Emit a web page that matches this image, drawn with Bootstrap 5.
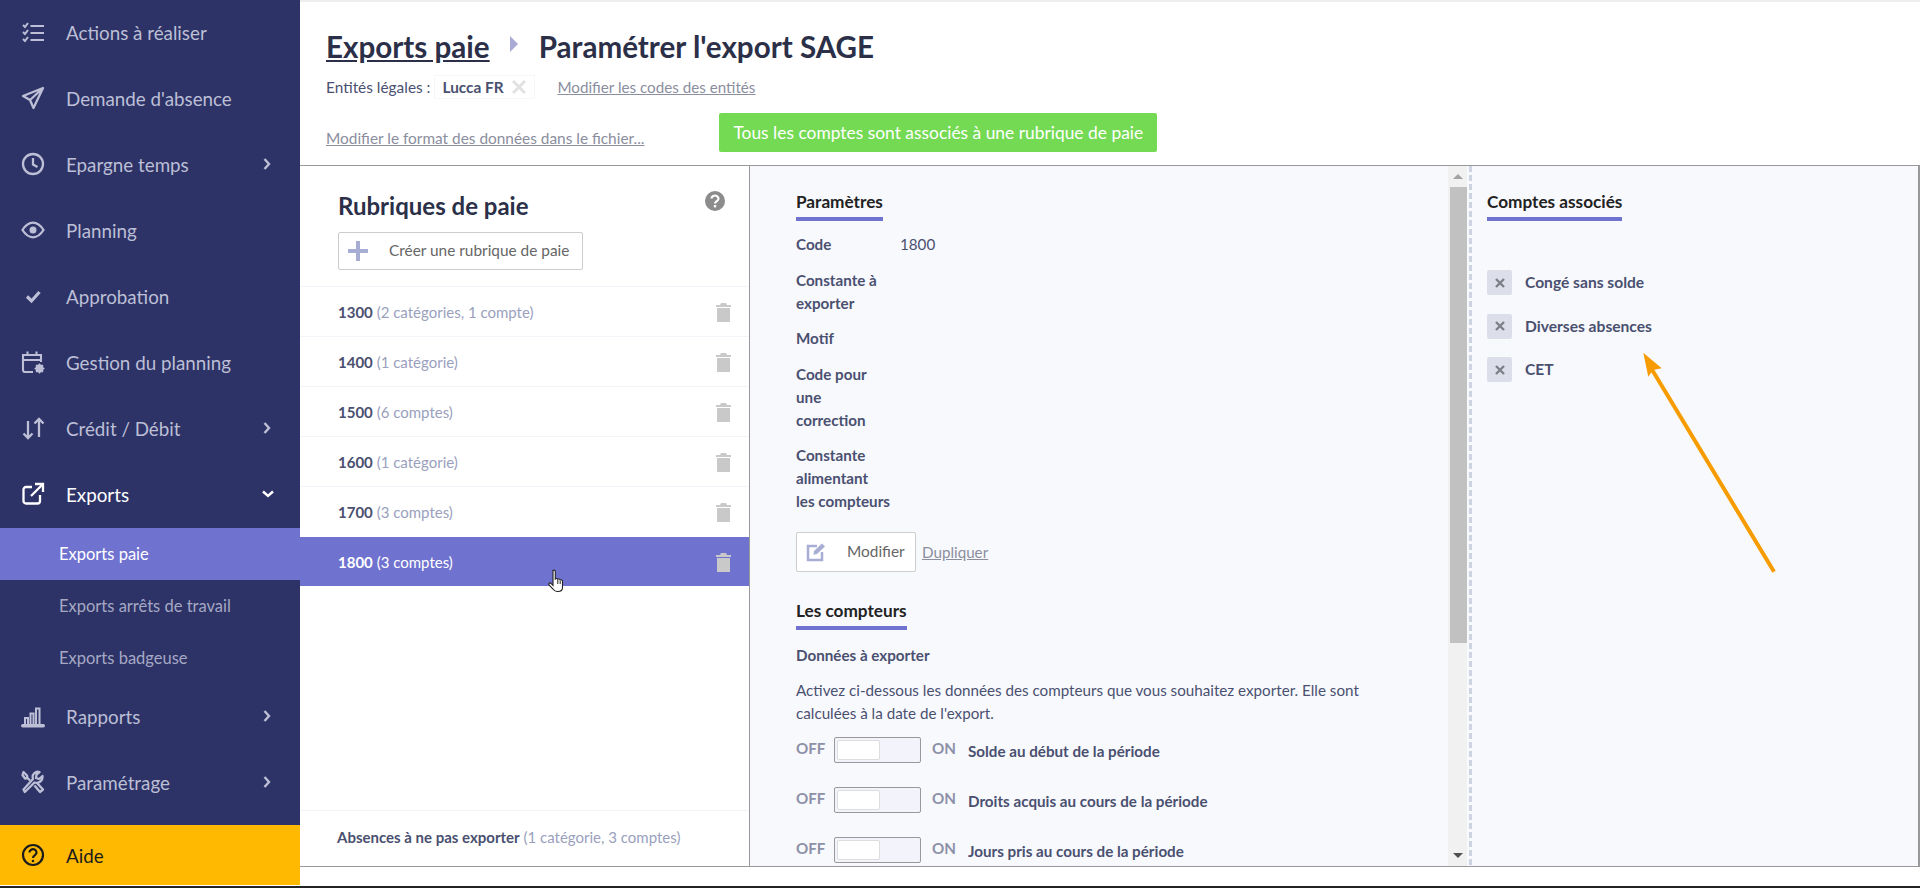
<!DOCTYPE html>
<html lang="fr">
<head>
<meta charset="utf-8">
<title>Paramétrer l'export SAGE</title>
<link href="https://cdn.jsdelivr.net/npm/bootstrap@5.3.0/dist/css/bootstrap.min.css" rel="stylesheet">
<style>
html,body{height:888px;overflow:hidden}
body{font-family:"Lato","Noto Sans",sans-serif;font-size:15.2px;line-height:23px;color:#4a5070;background:#fff}
.app-shell{height:886px}
.foot-strip{height:2px;background:#222}
.side-bar{width:300px;flex:none;background:#2d3366;height:885px}
.side-row{height:66px;padding:0 29px 2px 21px;color:#bcbfd6;font-size:18.8px;text-decoration:none}
.side-row svg.ico{width:24px;height:24px;flex:none;margin-right:21px}
.side-row.is-open{color:#fff}
.side-down{margin-right:-3px}
.side-sub{height:52px;padding:0 0 0 59px;color:#a5a8c4;font-size:16.5px;text-decoration:none}
.side-sub.is-on{background:#6f72cf;color:#fff}
.side-help{height:60px;padding-left:21px;background:#ffb900;color:#1c1c1c;font-size:18.8px;text-decoration:none}
.side-help svg{width:24px;height:24px;margin-right:21px}
.main-pane{min-width:0;border-top:2px solid #eee}
.top-head{height:164px;padding-left:26px;border-bottom:1px solid #999;flex:none}
.title-row{height:46px;margin-top:22px;font-size:29.6px;line-height:46px;font-weight:700;color:#2b3048}
.title-row a{color:#2b3048}
.crumb-arrow{width:8px;height:16px;margin:-6px 21px 0 20px}
.ent-row{margin-top:5px;height:24px;font-size:15.4px;line-height:24px}
.ent-chip{border:1px solid #f6f7fa;padding:0 8px 0 7px;margin:0 22px 0 4px;height:24px;font-weight:700;width:101px;flex:none;white-space:nowrap}
.mute-link{color:#8b8e9e;font-size:15.2px}
.head-third{margin-top:14px}
.head-third .mute-link{font-size:15.4px;margin-bottom:2px}
.ok-banner{background:#74da53;color:#fff;height:39px;line-height:39px;padding:0 14px;border-radius:2px;font-size:17.4px;flex:none;width:438px;white-space:nowrap;margin-left:75px}
.work-area{height:701px;border-bottom:1px solid #999;border-right:2px solid #999}
.rub-pane{width:450px;flex:none;border-right:1px solid #999;position:relative}
.rub-top{padding:25px 24px 16px 38px}
.rub-title{font-size:24px;line-height:30px;font-weight:700;color:#2b3048}
.plain-btn{height:38px;width:245px;border:1px solid #ccc;border-radius:2px;color:#666;background:#fff;font-size:15.4px;margin-top:11px;padding:0 0 0 9px;white-space:nowrap}
.plain-btn svg{margin-right:21px}
.rub-line{height:50px;padding:1px 18px 0 38px;border-top:1px solid #f3f4fa;font-size:15px}
.rub-line b{font-weight:700}
.rub-line span{color:#9a9fbe}
.rub-line.is-on{background:#6f72cf;color:#fff;height:49px;border-top:0;margin-top:1px}
.rub-line.is-on span{color:#fff}
.rub-foot{height:56px;padding:0 0 2px 37px;margin-top:auto;border-top:1px solid #f3f4fa;font-size:15px}
.rub-foot b{font-weight:700}
.rub-foot span{color:#9a9fbe}
.hand-cursor{position:absolute;left:248px;top:403px}
.param-pane{flex:1;min-width:0;background:#f8f9fd;overflow:hidden;padding:24px 0 0 46px}
.sec-head{display:inline-block;font-size:17.2px;line-height:24px;font-weight:700;color:#222;padding-bottom:3px;border-bottom:4px solid #6f72cf}
.kv-list{margin-top:12px}
.kv-row{margin-bottom:12.5px;font-size:15.2px}
.kv-row b{display:block;width:104px;font-weight:700;white-space:nowrap}
.edit-btn{height:40px;width:120px;border:1px solid #ccc;border-radius:2px;background:#fff;color:#666;font-size:15.4px;padding:0 0 0 9px}
.edit-btn svg{margin-right:21px}
.dup-link{color:#8b8e9e;font-size:15.2px;margin-left:6px}
.btn-line{margin-top:19px}
.sec-two{margin-top:27px}
.sub-strong{margin-top:14px;font-weight:700;font-size:15.2px}
.intro-text{margin:12px 0 0;font-size:15.2px;white-space:nowrap}
.toggle-line{height:50px;font-size:15.2px;white-space:nowrap}
.toggle-line b{margin-top:3px}
.toggle-list{margin-top:12px}
.off-on{font-weight:700;color:#8d91a8;width:38px;flex:none}
.off-on.on-word{width:36px;margin-left:11px}
.toggle-track{width:87px;height:26px;border:1px solid #999;border-radius:2px;background:#f2f3fb;padding:2px;flex:none}
.toggle-knob{width:43px;height:20px;background:#fff;border:1px solid #ddd;border-radius:2px}
.scroll-col{width:19px;background:#f1f1f1;flex:none}
.scroll-arrow{height:21px}
.scroll-thumb{height:456px;background:#c1c1c1;margin-left:2px}
.gap-fill{width:2px;flex:none;background:#f8f9fd}
.dash-col{width:3px;flex:none;background:repeating-linear-gradient(180deg,#ced3e2 0 6px,transparent 6px 9px) #f8f9fd}
.acc-pane{width:446px;flex:none;background:#f8f9fd;padding:24px 0 0 15px;position:relative}
.acc-list{margin-top:49px}
.acc-row{height:25px;margin-bottom:18.5px;font-weight:700;font-size:15.6px}
.acc-x{width:25px;height:25px;background:#dcdfe9;border-radius:2px;margin-right:13px}
.point-arrow{position:absolute;left:168px;top:184px}
</style>
</head>
<body>
<div class="app-shell d-flex">
  <nav class="side-bar d-flex flex-column flex-shrink-0">
    <a class="side-row d-flex align-items-center" href="#"><svg class="ico" viewBox="0 0 24 24" fill="none" stroke="currentColor" stroke-width="2.2"><path d="M9.5 6H23M9.5 13H23M9.5 20H23"/><path d="M2 5l2 2 3-4M2 12l2 2 3-4M2 19l2 2 3-4" stroke-width="2"/></svg>Actions à réaliser</a>
    <a class="side-row d-flex align-items-center" href="#"><svg class="ico" viewBox="0 0 24 24" fill="none" stroke="currentColor" stroke-width="2.3" stroke-linejoin="round"><path d="M22 2L2 10l7 4 3.5 8zM22 2L9 14"/></svg>Demande d'absence</a>
    <a class="side-row d-flex align-items-center" href="#"><svg class="ico" viewBox="0 0 24 24" fill="none" stroke="currentColor" stroke-width="2.3"><circle cx="12" cy="12" r="10"/><path d="M12 6v6.5l4.5 2.5"/></svg>Epargne temps<svg class="ms-auto" width="8" height="12" viewBox="0 0 8 12" fill="none" stroke="currentColor" stroke-width="2.4"><path d="M1.5 1l4.5 5-4.5 5"/></svg></a>
    <a class="side-row d-flex align-items-center" href="#"><svg class="ico" viewBox="0 0 24 24" fill="none" stroke="currentColor" stroke-width="2.3"><path d="M1.5 12C5 6.5 8.5 4.7 12 4.7S19 6.5 22.5 12C19 17.5 15.5 19.3 12 19.3S5 17.5 1.5 12z"/><circle cx="12" cy="12" r="3.5" fill="currentColor" stroke="none"/></svg>Planning</a>
    <a class="side-row d-flex align-items-center" href="#"><svg class="ico" viewBox="0 0 24 24" fill="none" stroke="currentColor" stroke-width="3.2"><path d="M6 12.5l4.500 4.500 8-9"/></svg>Approbation</a>
    <a class="side-row d-flex align-items-center" href="#"><svg class="ico" viewBox="0 0 24 24" fill="none" stroke="currentColor" stroke-width="2.1"><path d="M12 22H4a2 2 0 0 1-2-2V5h18v7M2 10h18M6.5 1.5V6M15.5 1.5V6"/><circle cx="18.5" cy="18.5" r="2.800" stroke-width="3"/><path d="M18.5 13.5v10M13.5 18.5h10M15 15l7 7M22 15l-7 7" stroke-width="1.2"/></svg>Gestion du planning</a>
    <a class="side-row d-flex align-items-center" href="#"><svg class="ico" viewBox="0 0 24 24" fill="none" stroke="currentColor" stroke-width="2.3"><path d="M7 5v17M2.5 17.5L7 22l4.500-4.500M18 21V3M13.5 7.5L18 3l4.500 4.500"/></svg>Crédit / Débit<svg class="ms-auto" width="8" height="12" viewBox="0 0 8 12" fill="none" stroke="currentColor" stroke-width="2.4"><path d="M1.5 1l4.5 5-4.5 5"/></svg></a>
    <a class="side-row is-open d-flex align-items-center" href="#"><svg class="ico" viewBox="0 0 24 24" fill="none" stroke="currentColor" stroke-width="2.3"><path d="M11 5H5a2.5 2.5 0 0 0-2.5 2.5V19A2.5 2.5 0 0 0 5 21.5h11.5A2.5 2.5 0 0 0 19 19v-6M10 14L22 2M14 2h8v8"/></svg>Exports<svg class="ms-auto side-down" width="12" height="8" viewBox="0 0 12 8" fill="none" stroke="currentColor" stroke-width="2.4"><path d="M1 1.5l5 4.500 5-4.500"/></svg></a>
    <a class="side-sub is-on d-flex align-items-center" href="#">Exports paie</a>
    <a class="side-sub d-flex align-items-center" href="#">Exports arrêts de travail</a>
    <a class="side-sub d-flex align-items-center" href="#">Exports badgeuse</a>
    <a class="side-row d-flex align-items-center" href="#"><svg class="ico" viewBox="0 0 24 24" fill="none" stroke="currentColor" stroke-width="2"><path d="M4 20v-6h3v6M9.5 20V9.5h3V20M15 20V4.5h3.500V20"/><rect x="1" y="21" width="22" height="1.4" rx=".7" fill="currentColor"/></svg>Rapports<svg class="ms-auto" width="8" height="12" viewBox="0 0 8 12" fill="none" stroke="currentColor" stroke-width="2.4"><path d="M1.5 1l4.5 5-4.5 5"/></svg></a>
    <a class="side-row d-flex align-items-center" href="#"><svg class="ico" viewBox="0 0 24 24" fill="none" stroke="currentColor" stroke-width="2.3" stroke-linejoin="round"><path d="M2.5 19.5L3.800 22 13.500 12.500c3.500 1.300 8.500-1 8-6.500L18 9l-3-1 .5-3.500 3-2.500c-4-1-8 2-6.500 7z"/><path d="M9 10.500L6.500 8 6 5.500 2.500 2 1.500 5 4 8.500 6.500 8M13.500 15.500L19 22l3-2.500-6-6.500"/></svg>Paramétrage<svg class="ms-auto" width="8" height="12" viewBox="0 0 8 12" fill="none" stroke="currentColor" stroke-width="2.4"><path d="M1.5 1l4.5 5-4.5 5"/></svg></a>
    <a class="side-help d-flex align-items-center mt-auto" href="#"><svg viewBox="0 0 24 24" fill="none" stroke="currentColor" stroke-width="2.2"><circle cx="12" cy="12" r="10"/><path d="M8.500 9.500a3.500 3.300 0 1 1 5.500 2.700c-1.300.9-2 1.400-2 2.800"/><circle cx="12" cy="18" r="1.3" fill="currentColor" stroke="none"/></svg>Aide</a>
  </nav>
  <main class="main-pane flex-grow-1 d-flex flex-column">
    <header class="top-head">
      <div class="title-row d-flex align-items-center"><a href="#">Exports paie</a><svg class="crumb-arrow" viewBox="0 0 8 16"><path d="M0 0l8 8-8 8z" fill="#a9abd4"/></svg><span>Paramétrer l'export SAGE</span></div>
      <div class="ent-row d-flex align-items-center"><span>Entités légales :</span><span class="ent-chip d-flex align-items-center justify-content-between">Lucca FR<svg width="14" height="14" viewBox="0 0 14 14" stroke="#e2e2e2" stroke-width="3"><path d="M1 1l12 12M13 1L1 13"/></svg></span><a class="mute-link" href="#">Modifier les codes des entités</a></div>
      <div class="head-third d-flex align-items-end"><a class="mute-link" href="#">Modifier le format des données dans le fichier...</a><div class="ok-banner">Tous les comptes sont associés à une rubrique de paie</div></div>
    </header>
    <div class="work-area d-flex">
      <section class="rub-pane d-flex flex-column">
        <div class="rub-top d-flex justify-content-between">
          <div>
            <div class="rub-title">Rubriques de paie</div>
            <button class="plain-btn btn d-flex align-items-center" type="button"><svg width="20" height="20" viewBox="0 0 20 20"><path d="M8 0h4v8h8v4h-8v8H8v-8H0V8h8z" fill="#a7add3"/></svg>Créer une rubrique de paie</button>
          </div>
          <svg width="20" height="20" viewBox="0 0 20 20"><circle cx="10" cy="10" r="10" fill="#8c8c8c"/><path d="M6.500 7.500A3.500 3 0 1 1 12 10c-1.300.8-2 1.300-2 2.500" fill="none" stroke="#fff" stroke-width="2.2"/><rect x="8.800" y="14" width="2.4" height="2.4" fill="#fff"/></svg>
        </div>
        <div class="rub-line d-flex align-items-center justify-content-between"><div><b>1300</b> <span>(2 catégories, 1 compte)</span></div><svg width="15" height="19" viewBox="0 0 15 19" fill="#c9c9c9"><path d="M5 0h5l1 2h4v2H0V2h4zM1 5h13v14H1z"/></svg></div>
        <div class="rub-line d-flex align-items-center justify-content-between"><div><b>1400</b> <span>(1 catégorie)</span></div><svg width="15" height="19" viewBox="0 0 15 19" fill="#c9c9c9"><path d="M5 0h5l1 2h4v2H0V2h4zM1 5h13v14H1z"/></svg></div>
        <div class="rub-line d-flex align-items-center justify-content-between"><div><b>1500</b> <span>(6 comptes)</span></div><svg width="15" height="19" viewBox="0 0 15 19" fill="#c9c9c9"><path d="M5 0h5l1 2h4v2H0V2h4zM1 5h13v14H1z"/></svg></div>
        <div class="rub-line d-flex align-items-center justify-content-between"><div><b>1600</b> <span>(1 catégorie)</span></div><svg width="15" height="19" viewBox="0 0 15 19" fill="#c9c9c9"><path d="M5 0h5l1 2h4v2H0V2h4zM1 5h13v14H1z"/></svg></div>
        <div class="rub-line d-flex align-items-center justify-content-between"><div><b>1700</b> <span>(3 comptes)</span></div><svg width="15" height="19" viewBox="0 0 15 19" fill="#c9c9c9"><path d="M5 0h5l1 2h4v2H0V2h4zM1 5h13v14H1z"/></svg></div>
        <div class="rub-line is-on d-flex align-items-center justify-content-between"><div><b>1800</b> <span>(3 comptes)</span></div><svg width="15" height="19" viewBox="0 0 15 19" fill="#c9c9c9"><path d="M5 0h5l1 2h4v2H0V2h4zM1 5h13v14H1z"/></svg></div>
        <div class="rub-foot d-flex align-items-center"><div><b>Absences à ne pas exporter</b> <span>(1 catégorie, 3 comptes)</span></div></div>
        <svg class="hand-cursor" width="18" height="24" viewBox="0 0 18 24"><path d="M5 1.500c1.200-1 2.300 0 2.300 1V10c1-.8 2-.6 2.400.3 1-.6 2-.4 2.400.5 1.200-.4 2.400.3 2.400 1.500v6.200c0 2.500-2 4-4.500 4H9c-2 0-3-1-4-2.500L1 16c-.8-1.500 1-2.700 2-1.600l2 2z" fill="#fff" stroke="#222" stroke-width="1.1"/><path d="M9.800 11v4M12.200 11.500V15" stroke="#222"/></svg>
      </section>
      <section class="param-pane">
        <div class="sec-head">Paramètres</div>
        <div class="kv-list">
          <div class="kv-row d-flex"><b>Code</b><span>1800</span></div>
          <div class="kv-row d-flex"><b>Constante à<br>exporter</b></div>
          <div class="kv-row d-flex"><b>Motif</b></div>
          <div class="kv-row d-flex"><b>Code pour<br>une<br>correction</b></div>
          <div class="kv-row d-flex"><b>Constante<br>alimentant<br>les compteurs</b></div>
        </div>
        <div class="btn-line d-flex align-items-center">
          <button class="edit-btn btn d-flex align-items-center" type="button"><svg width="20" height="20" viewBox="0 0 20 20" fill="none" stroke="#a7add3" stroke-width="2.5"><path d="M11 4H2v14h14V10"/><path d="M8 9l8-7.500 3 3-8 7.500-3.500 .8z" fill="#a7add3" stroke="none"/></svg>Modifier</button>
          <a class="dup-link" href="#">Dupliquer</a>
        </div>
        <div class="sec-two"><div class="sec-head">Les compteurs</div></div>
        <div class="sub-strong">Données à exporter</div>
        <p class="intro-text">Activez ci-dessous les données des compteurs que vous souhaitez exporter. Elle sont<br>calculées à la date de l'export.</p>
        <div class="toggle-list">
          <div class="toggle-line d-flex align-items-start"><span class="off-on">OFF</span><div class="toggle-track"><div class="toggle-knob"></div></div><span class="off-on on-word">ON</span><b>Solde au début de la période</b></div>
          <div class="toggle-line d-flex align-items-start"><span class="off-on">OFF</span><div class="toggle-track"><div class="toggle-knob"></div></div><span class="off-on on-word">ON</span><b>Droits acquis au cours de la période</b></div>
          <div class="toggle-line d-flex align-items-start"><span class="off-on">OFF</span><div class="toggle-track"><div class="toggle-knob"></div></div><span class="off-on on-word">ON</span><b>Jours pris au cours de la période</b></div>
        </div>
      </section>
      <div class="scroll-col d-flex flex-column">
        <div class="scroll-arrow d-flex align-items-center justify-content-center"><svg width="10" height="5" viewBox="0 0 10 5"><path d="M5 0l5 5H0z" fill="#a3a3a3"/></svg></div>
        <div class="scroll-thumb"></div>
        <div class="scroll-arrow d-flex align-items-center justify-content-center mt-auto"><svg width="10" height="5" viewBox="0 0 10 5"><path d="M0 0h10L5 5z" fill="#505050"/></svg></div>
      </div>
      <div class="gap-fill"></div>
      <div class="dash-col"></div>
      <section class="acc-pane">
        <div class="sec-head">Comptes associés</div>
        <div class="acc-list">
          <div class="acc-row d-flex align-items-center"><span class="acc-x d-flex align-items-center justify-content-center"><svg width="10" height="10" viewBox="0 0 10 10" stroke="#7d7f88" stroke-width="2.4"><path d="M1 1l8 8M9 1L1 9"/></svg></span>Congé sans solde</div>
          <div class="acc-row d-flex align-items-center"><span class="acc-x d-flex align-items-center justify-content-center"><svg width="10" height="10" viewBox="0 0 10 10" stroke="#7d7f88" stroke-width="2.4"><path d="M1 1l8 8M9 1L1 9"/></svg></span>Diverses absences</div>
          <div class="acc-row d-flex align-items-center"><span class="acc-x d-flex align-items-center justify-content-center"><svg width="10" height="10" viewBox="0 0 10 10" stroke="#7d7f88" stroke-width="2.4"><path d="M1 1l8 8M9 1L1 9"/></svg></span>CET</div>
        </div>
        <svg class="point-arrow" width="140" height="225" viewBox="0 0 140 225"><path d="M11 18L133 220" stroke="#f79c00" stroke-width="4" stroke-linecap="square"/><path d="M3.300 2.700L21.700 18.300 13 20 8.300 26.700z" fill="#f79c00"/></svg>
      </section>
    </div>
  </main>
</div>
<div class="foot-strip"></div>
<script src="https://cdn.jsdelivr.net/npm/bootstrap@5.3.0/dist/js/bootstrap.bundle.min.js"></script>
</body>
</html>
